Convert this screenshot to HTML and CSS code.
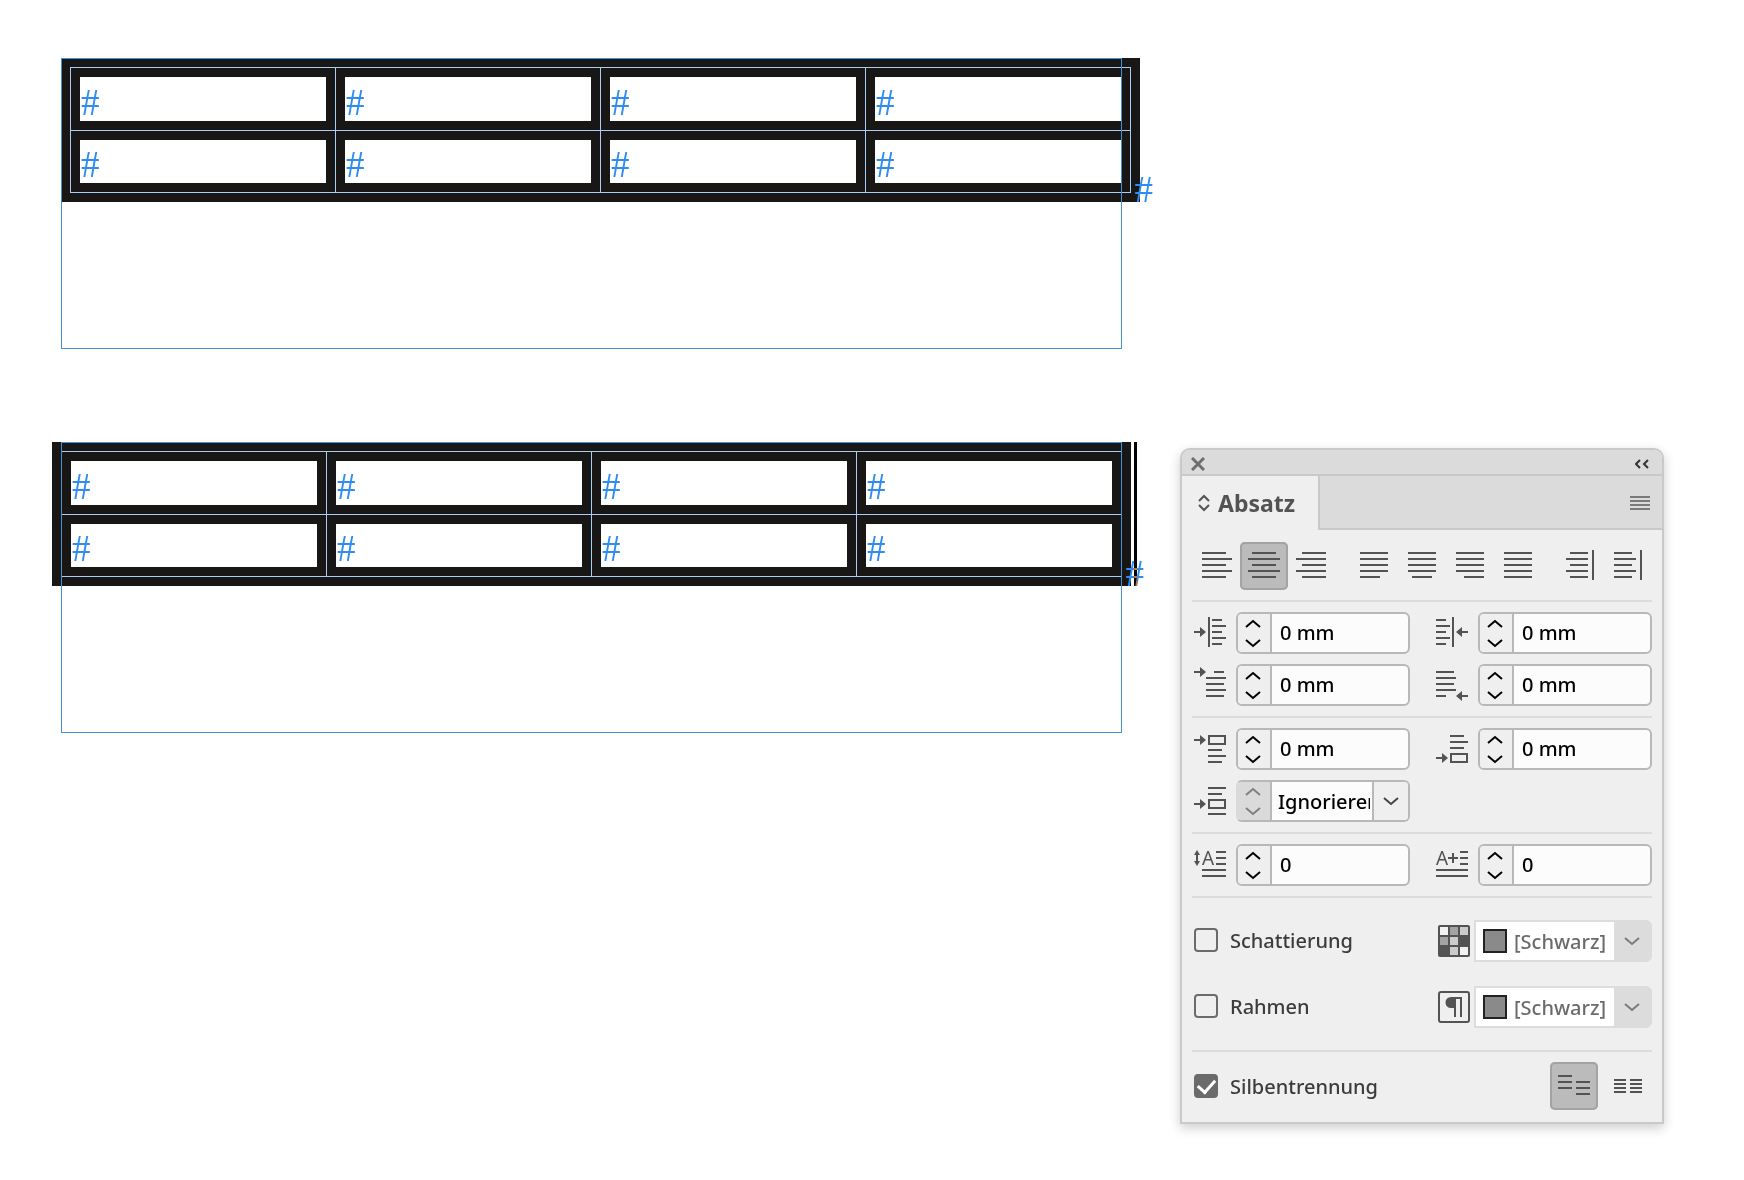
FILE: index.html
```
<!DOCTYPE html>
<html lang="de">
<head>
    <meta charset="utf-8">
    <title>Absatz</title>
    <link rel="stylesheet" href="styles.css">
</head>
<body>
    <!-- Shared icon parts -->
    <svg class="defs" width="0" height="0" aria-hidden="true">
        <defs>
            <symbol id="up" viewBox="0 0 16 10"><path d="M1 8 L8 2 L15 8"/></symbol>
            <symbol id="down" viewBox="0 0 16 10"><path d="M1 2 L8 8 L15 2"/></symbol>
            <g id="arrow"><path d="M0 0H7"/><path class="fill" d="M6 -5 L12 0 L6 5Z"/></g>
        </defs>
    </svg>

    <main class="workspace">
        <!-- Text frame, table aligned left -->
        <section class="frame">
            <table class="grid">
                <tr><td>#</td><td>#</td><td>#</td><td>#</td></tr>
                <tr><td>#</td><td>#</td><td>#</td><td>#</td></tr>
            </table>
            <span class="end-mark">#</span>
        </section>

        <!-- Text frame, table centered -->
        <section class="frame centered">
            <table class="grid">
                <tr><td>#</td><td>#</td><td>#</td><td>#</td></tr>
                <tr><td>#</td><td>#</td><td>#</td><td>#</td></tr>
            </table>
            <span class="end-mark">#</span>
            <span class="caret"></span>
        </section>

        <!-- Paragraph panel -->
        <aside class="panel">
            <div class="titlebar">
                <button aria-label="Schließen">
                    <svg class="close" width="14" height="14"><path d="M1 1L13 13M13 1L1 13"/></svg>
                </button>
                <button aria-label="Minimieren">
                    <svg class="collapse" width="14" height="12"><path d="M5 2L1 6L5 10M13 2L9 6L13 10"/></svg>
                </button>
            </div>
            <div class="tabs">
                <button class="tab">
                    <svg width="12" height="18"><path d="M1 7L6 2L11 7M1 11L6 16L11 11"/></svg>
                    Absatz
                </button>
                <div class="tab-rest">
                    <button aria-label="Menü">
                        <svg class="menu" width="20" height="14"><path d="M0 1H20M0 5H20M0 9H20M0 13H20"/></svg>
                    </button>
                </div>
            </div>

            <!-- Alignment -->
            <div class="row align">
                <div class="group">
                    <button class="tool" aria-label="Linksbündig"><svg width="48" height="48"><path d="M10 11H34M10 17H40M10 23H34M10 29H40M10 35H34"/></svg></button>
                    <button class="tool active" aria-label="Zentriert"><svg width="48" height="48"><path d="M12 11H36M8 17H40M12 23H36M8 29H40M12 35H36"/></svg></button>
                    <button class="tool" aria-label="Rechtsbündig"><svg width="48" height="48"><path d="M14 11H38M8 17H38M14 23H38M8 29H38M14 35H38"/></svg></button>
                </div>
                <div class="group">
                    <button class="tool" aria-label="Blocksatz links"><svg width="48" height="48"><path d="M10 11H38M10 17H38M10 23H38M10 29H38M10 35H30"/></svg></button>
                    <button class="tool" aria-label="Blocksatz zentriert"><svg width="48" height="48"><path d="M10 11H38M10 17H38M10 23H38M10 29H38M14 35H34"/></svg></button>
                    <button class="tool" aria-label="Blocksatz rechts"><svg width="48" height="48"><path d="M10 11H38M10 17H38M10 23H38M10 29H38M18 35H38"/></svg></button>
                    <button class="tool" aria-label="Blocksatz alle Zeilen"><svg width="48" height="48"><path d="M10 11H38M10 17H38M10 23H38M10 29H38M10 35H38"/></svg></button>
                </div>
                <div class="group">
                    <button class="tool" aria-label="Am Rücken ausrichten"><svg width="48" height="48"><path d="M14 11H32M10 17H32M14 23H32M10 29H32M14 35H32M37 8V38"/></svg></button>
                    <button class="tool" aria-label="Nicht am Rücken ausrichten"><svg width="48" height="48"><path d="M10 11H28M10 17H32M10 23H28M10 29H32M10 35H28M37 8V38"/></svg></button>
                </div>
            </div>

            <!-- Indents -->
            <div class="row fields">
                <div class="field">
                    <label for="left" aria-label="Einzug links"><svg width="44" height="42"><use href="#arrow" x="2" y="20"/><path d="M17 5V35M20 8H30M20 14H34M20 20H30M20 26H34M20 32H30"/></svg></label>
                    <div class="box">
                        <div class="stepper"><button aria-label="Mehr"><svg><use href="#up"/></svg></button><button aria-label="Weniger"><svg><use href="#down"/></svg></button></div>
                        <input id="left" type="text" value="0 mm">
                    </div>
                </div>
                <div class="field">
                    <label for="right" aria-label="Einzug rechts"><svg width="44" height="42"><use href="#arrow" transform="translate(34 20) scale(-1 1)"/><path d="M2 8H12M2 14H16M2 20H12M2 26H16M2 32H12M19 5V35"/></svg></label>
                    <div class="box">
                        <div class="stepper"><button aria-label="Mehr"><svg><use href="#up"/></svg></button><button aria-label="Weniger"><svg><use href="#down"/></svg></button></div>
                        <input id="right" type="text" value="0 mm">
                    </div>
                </div>
                <div class="field">
                    <label for="first" aria-label="Einzug erste Zeile"><svg width="44" height="42"><use href="#arrow" x="2" y="8"/><path d="M22 8H32M14 14H34M14 20H32M14 26H34M14 32H32"/></svg></label>
                    <div class="box">
                        <div class="stepper"><button aria-label="Mehr"><svg><use href="#up"/></svg></button><button aria-label="Weniger"><svg><use href="#down"/></svg></button></div>
                        <input id="first" type="text" value="0 mm">
                    </div>
                </div>
                <div class="field">
                    <label for="last" aria-label="Einzug letzte Zeile"><svg width="44" height="42"><use href="#arrow" transform="translate(34 32) scale(-1 1)"/><path d="M2 8H20M2 14H22M2 20H20M2 26H22M2 32H12"/></svg></label>
                    <div class="box">
                        <div class="stepper"><button aria-label="Mehr"><svg><use href="#up"/></svg></button><button aria-label="Weniger"><svg><use href="#down"/></svg></button></div>
                        <input id="last" type="text" value="0 mm">
                    </div>
                </div>
            </div>

            <!-- Spacing -->
            <div class="row fields">
                <div class="field">
                    <label for="before" aria-label="Abstand davor"><svg width="44" height="42"><use href="#arrow" x="2" y="12"/><path d="M17 8H33V16H17ZM16 22H30M16 28H34M16 34H30"/></svg></label>
                    <div class="box">
                        <div class="stepper"><button aria-label="Mehr"><svg><use href="#up"/></svg></button><button aria-label="Weniger"><svg><use href="#down"/></svg></button></div>
                        <input id="before" type="text" value="0 mm">
                    </div>
                </div>
                <div class="field">
                    <label for="after" aria-label="Abstand danach"><svg width="44" height="42"><use href="#arrow" x="2" y="30"/><path d="M16 8H30M16 14H34M16 20H30M17 26H33V34H17Z"/></svg></label>
                    <div class="box">
                        <div class="stepper"><button aria-label="Mehr"><svg><use href="#up"/></svg></button><button aria-label="Weniger"><svg><use href="#down"/></svg></button></div>
                        <input id="after" type="text" value="0 mm">
                    </div>
                </div>
                <div class="field">
                    <label for="between" aria-label="Abstand zwischen Absätzen"><svg width="44" height="42"><use href="#arrow" x="2" y="24"/><path d="M16 8H34M16 14H30M17 20H33V28H17ZM16 34H34"/></svg></label>
                    <div class="box combo">
                        <div class="stepper"><button disabled aria-label="Mehr"><svg><use href="#up"/></svg></button><button disabled aria-label="Weniger"><svg><use href="#down"/></svg></button></div>
                        <input id="between" type="text" value="Ignorieren">
                        <button class="open" aria-label="Auswählen"><svg><use href="#down"/></svg></button>
                    </div>
                </div>
            </div>

            <!-- Drop caps -->
            <div class="row fields">
                <div class="field">
                    <label for="lines" aria-label="Initialhöhe"><svg width="44" height="42"><path d="M5 10V18M24 8H34M24 14H34M24 20H34M10 26H34M10 32H34"/><path class="fill" d="M5 6L8 11H2ZM5 22L8 17H2Z"/><text x="10" y="21">A</text></svg></label>
                    <div class="box">
                        <div class="stepper"><button aria-label="Mehr"><svg><use href="#up"/></svg></button><button aria-label="Weniger"><svg><use href="#down"/></svg></button></div>
                        <input id="lines" type="text" value="0">
                    </div>
                </div>
                <div class="field">
                    <label for="chars" aria-label="Ein oder mehrere Zeichen als Initial"><svg width="44" height="42"><path d="M14 14H24M19 9V19M26 8H34M26 14H34M26 20H34M2 26H34M2 32H34"/><text x="2" y="21">A</text></svg></label>
                    <div class="box">
                        <div class="stepper"><button aria-label="Mehr"><svg><use href="#up"/></svg></button><button aria-label="Weniger"><svg><use href="#down"/></svg></button></div>
                        <input id="chars" type="text" value="0">
                    </div>
                </div>
            </div>

            <!-- Shading and border -->
            <div class="row options">
                <div class="option">
                    <input id="shading" type="checkbox">
                    <label for="shading">Schattierung</label>
                    <svg width="32" height="32">
                        <rect class="fill" width="32" height="32" rx="2"/>
                        <path class="c1" d="M2 2h8v8h-8zM22 22h8v8h-8z"/>
                        <path class="c2" d="M22 2h8v8h-8zM12 12h8v8h-8zM12 22h8v8h-8z"/>
                        <path class="c3" d="M12 2h8v8h-8zM2 12h8v8h-8z"/>
                    </svg>
                    <div class="color">
                        <span class="swatch"></span>
                        <select aria-label="Farbe der Schattierung"><option>[Schwarz]</option></select>
                        <span class="chevron"><svg><use href="#down"/></svg></span>
                    </div>
                </div>
                <div class="option">
                    <input id="border" type="checkbox">
                    <label for="border">Rahmen</label>
                    <svg width="32" height="32">
                        <rect x="1" y="1" width="30" height="30" rx="2"/>
                        <path class="fill" d="M18 17H13A5 5 0 0 1 13 6H24V8H18Z"/>
                        <path d="M17 7V26M23 7V26"/>
                    </svg>
                    <div class="color">
                        <span class="swatch"></span>
                        <select aria-label="Farbe des Rahmens"><option>[Schwarz]</option></select>
                        <span class="chevron"><svg><use href="#down"/></svg></span>
                    </div>
                </div>
            </div>

            <!-- Hyphenation -->
            <div class="row option hyphens">
                <input id="hyphens" type="checkbox" checked>
                <label for="hyphens">Silbentrennung</label>
                <button class="tool active" aria-label="Nicht am Grundlinienraster"><svg width="48" height="48"><path d="M8 14H22M8 20H22M8 26H22M26 20H40M26 26H40M26 32H40"/></svg></button>
                <button class="tool" aria-label="Am Grundlinienraster"><svg width="48" height="48"><path d="M10 18H22M10 22H22M10 26H22M10 30H22M26 18H38M26 22H38M26 26H38M26 30H38"/></svg></button>
            </div>
        </aside>
    </main>
</body>
</html>
```
FILE: styles.css
```
* {
    box-sizing: border-box;
}

body {
    margin: 0;
    background: #fff;
    font-family: "Noto Sans", "Open Sans", sans-serif;
    font-size: 20px;
    font-weight: 500;
    color: #3c3c3c;
}

.defs {
    position: absolute;
}

svg {
    display: block;
    flex: none;
    fill: none;
    stroke: #535353;
    stroke-width: 2px;
}

svg .fill,
svg text {
    fill: #535353;
    stroke: none;
}

svg text {
    font-size: 19px;
    font-weight: 400;
}

button {
    padding: 0;
    border: 0;
    background: none;
    font: inherit;
    color: inherit;
}

.workspace {
    display: grid;
    grid-template-columns: 1fr 484px;
    gap: 93px 58px;
    align-items: start;
    padding: 58px 80px 56px 61px;
}

/* Text frames */
.frame {
    position: relative;
    grid-column: 1;
    min-height: 291px;
    font-family: "Liberation Serif", serif;
    font-size: 37px;
    font-weight: 400;
    line-height: 36px;
    color: #2f8cf0;
}

/* the frame edge is drawn over the table */
.frame::after {
    content: "";
    position: absolute;
    inset: 0;
    border: 1px solid #4292d4;
}

.grid {
    width: calc(100% + 18px);
    border: 9px solid #181716;
    border-spacing: 1px;
    table-layout: fixed;
    background: #a9cdf5;
}

.centered .grid {
    margin-left: -9px;
}

.grid td {
    height: 62px;
    padding: 7px 0 0 1px;
    border: 9px solid #181716;
    background: #fff;
}

.grid tr:last-child td {
    height: 61px;
}

.end-mark {
    position: absolute;
    top: 114px;
    right: -31px;
}

.centered .end-mark {
    right: -22px;
}

.caret {
    position: absolute;
    top: 0;
    right: -15px;
    width: 3px;
    height: 144px;
    background: #fff;
    mix-blend-mode: difference;
}

/* Panel */
.panel {
    grid-column: 2;
    grid-row: 2;
    margin-top: 6px;
    border: 2px solid #c9c9c9;
    border-radius: 10px 10px 0 0;
    background: #efefef;
    box-shadow: 0 4px 12px rgba(0, 0, 0, 0.2);
}

.titlebar {
    display: flex;
    align-items: center;
    justify-content: space-between;
    height: 26px;
    padding: 3px 13px 0 9px;
    border-bottom: 2px solid #c9c9c9;
    border-radius: 8px 8px 0 0;
    background: #dbdbdb;
}

.close {
    stroke: #6e6e6e;
    stroke-width: 3px;
}

.collapse {
    stroke: #333;
}

.tabs {
    display: flex;
    height: 54px;
}

.tab {
    display: flex;
    align-items: center;
    gap: 8px;
    padding: 0 23px 0 16px;
    font-size: 23px;
    font-weight: bold;
    color: #535353;
}

.tab-rest {
    display: flex;
    flex: 1;
    align-items: center;
    justify-content: flex-end;
    padding: 2px 12px 0 0;
    border: solid #c9c9c9;
    border-width: 0 0 2px 2px;
    background: #dbdbdb;
}

.menu {
    stroke: #7a7a7a;
}

.row {
    margin: 0 10px;
    padding: 10px 0;
    border-bottom: 2px solid #dcdcdc;
}

.align {
    display: flex;
    justify-content: space-between;
    padding-top: 12px;
}

.group {
    display: flex;
}

.tool {
    width: 48px;
    height: 48px;
    border-radius: 5px;
}

.tool.active {
    background: #bbb;
    box-shadow: inset 0 0 0 2px #a3a3a3;
}

/* Number fields */
.fields {
    display: grid;
    grid-template-columns: 1fr 1fr;
    gap: 10px 24px;
}

.field {
    display: flex;
}

.box {
    display: flex;
    flex: 1;
    min-width: 0;
    height: 42px;
    border: 2px solid #b8b8b8;
    border-radius: 6px;
    background: #fcfcfc;
    overflow: hidden;
}

.stepper {
    display: flex;
    flex: none;
    flex-direction: column;
    width: 34px;
    padding-right: 2px;
    border-right: 2px solid #b8b8b8;
    background: #efefef;
}

.stepper button {
    display: flex;
    flex: 1;
    align-items: center;
    justify-content: center;
}

.stepper svg,
.open svg,
.chevron svg {
    width: 16px;
    height: 10px;
    stroke: #000;
}

.box input {
    flex: 1;
    width: 0;
    min-width: 0;
    padding: 0 0 2px 8px;
    border: 0;
    background: none;
    font: inherit;
    color: #000;
}

.combo {
    border-left-color: #dadada;
}

.combo .stepper {
    margin: -2px 0;
    padding: 2px 2px 2px 0;
    background: #dadada;
}

.combo .stepper svg {
    stroke: #7f7f7f;
}

.combo input {
    margin-right: 2px;
    padding: 0 0 0 6px;
}

.open {
    display: flex;
    align-items: center;
    justify-content: center;
    width: 36px;
    border-left: 2px solid #b8b8b8;
    background: #efefef;
}

.open svg {
    stroke: #444;
}

/* Check boxes */
.options {
    display: grid;
    gap: 24px;
    padding: 22px 0;
}

.option {
    display: flex;
    align-items: center;
}

.option label {
    flex: 1;
    padding: 0 0 2px 12px;
}

.option input {
    appearance: none;
    width: 24px;
    height: 24px;
    margin: 0 0 2px 2px;
    border: 2px solid #6b6b6b;
    border-radius: 4px;
}

.option input:checked {
    display: grid;
    place-items: center;
    background: #6b6b6b;
}

.option input:checked::after {
    content: "";
    width: 8px;
    height: 14px;
    margin-bottom: 4px;
    border: solid #fff;
    border-width: 0 3px 3px 0;
    transform: rotate(42deg);
}

.c1 {
    fill: #f2f2f2;
    stroke: none;
}

.c2 {
    fill: #cbcbcb;
    stroke: none;
}

.c3 {
    fill: #a3a3a3;
    stroke: none;
}

.color {
    display: flex;
    align-items: center;
    width: 178px;
    height: 42px;
    margin-left: 4px;
    border: 2px solid #dcdcdc;
    border-radius: 0 6px 6px 0;
    background: #fff;
}

.swatch {
    width: 24px;
    height: 24px;
    margin-left: 7px;
    border: 2px solid #222;
    background: #8a8a8a;
}

.color select {
    appearance: none;
    flex: 1;
    min-width: 0;
    height: 38px;
    padding: 0 0 0 7px;
    border: 0;
    background: none;
    font: inherit;
    color: #6b6b6b;
}

.chevron {
    display: flex;
    align-items: center;
    justify-content: center;
    width: 36px;
    height: 38px;
    background: #dcdcdc;
    pointer-events: none;
}

.chevron svg {
    stroke: #7a7a7a;
}

.hyphens {
    padding-bottom: 12px;
    border: 0;
}

.hyphens input {
    margin-bottom: 0;
}

.hyphens label {
    padding-bottom: 0;
}

.hyphens .tool + .tool {
    margin-left: 6px;
}
```
